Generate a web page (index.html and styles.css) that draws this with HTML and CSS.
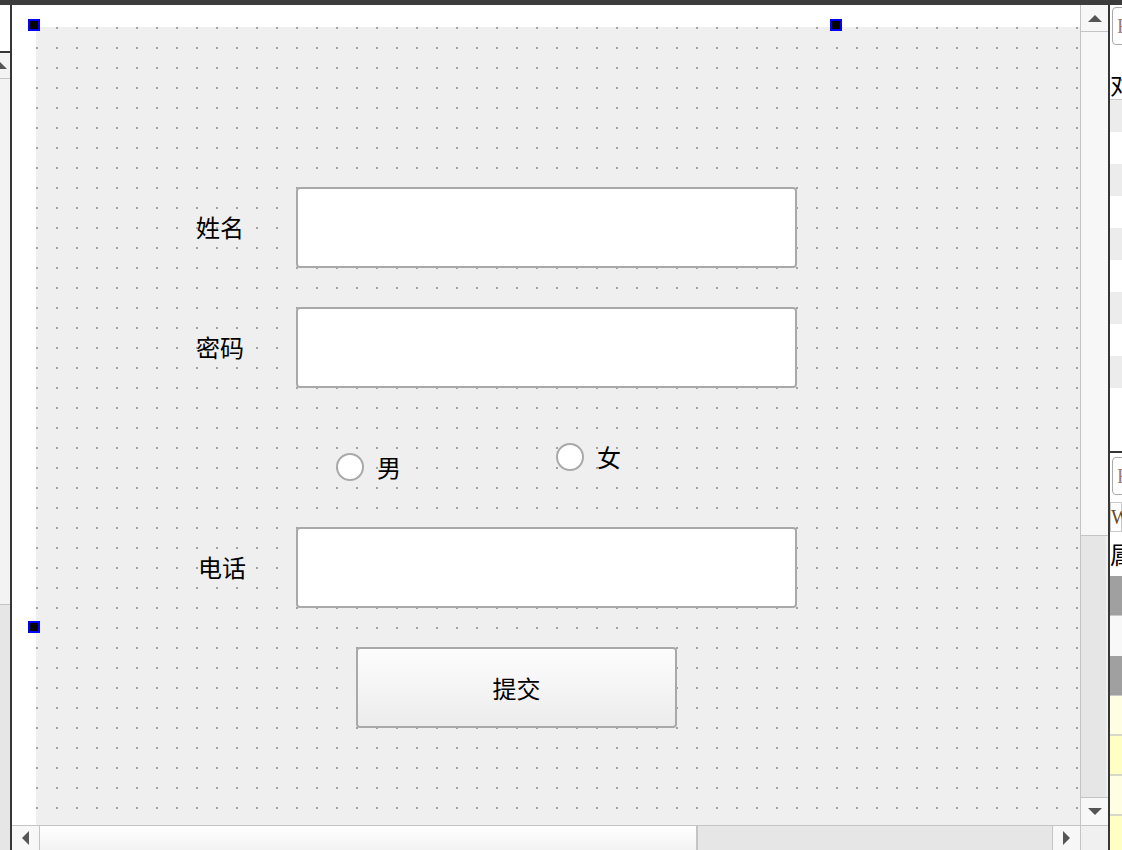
FILE: index.html
```html
<!DOCTYPE html>
<html lang="zh-CN">
<head>
    <meta charset="UTF-8">
    <title>Form - 设计器</title>
    <link rel="stylesheet" href="styles.css">
</head>
<body>
    <div class="topbar"></div>
    <div class="main">
        <div class="left-pane">
            <div class="lp-head"></div>
            <div class="lp-list">
                <span class="lp-arrow"></span>
                <div class="lp-thumb"></div>
            </div>
            <div class="lp-bottom"></div>
        </div>

        <div class="editor">
            <div class="editor-top">
                <div class="canvas">
                    <div class="grid">
                        <div class="form">
                            <div class="field">
                                <label class="field-label">姓名</label>
                                <div class="line-edit"></div>
                            </div>
                            <div class="field">
                                <label class="field-label">密码</label>
                                <div class="line-edit"></div>
                            </div>
                            <div class="radios">
                                <div class="radio radio-male">
                                    <span class="radio-dot"></span>
                                    <span class="radio-text">男</span>
                                </div>
                                <div class="radio radio-female">
                                    <span class="radio-dot"></span>
                                    <span class="radio-text">女</span>
                                </div>
                            </div>
                            <div class="field">
                                <label class="field-label field-label-phone">电话</label>
                                <div class="line-edit"></div>
                            </div>
                            <div class="submit-row">
                                <div class="push-button">提交</div>
                            </div>
                        </div>
                    </div>
                    <!-- selection handles of the form -->
                    <span class="handle handle-tl"></span>
                    <span class="handle handle-tr"></span>
                    <span class="handle handle-bl"></span>
                </div>

                <div class="vscroll">
                    <div class="sb-btn"><span class="arrow-up"></span></div>
                    <div class="sb-thumb-v"></div>
                    <div class="sb-track-v"></div>
                    <div class="sb-btn sb-btn-down"><span class="arrow-down"></span></div>
                </div>
            </div>

            <div class="hscroll">
                <div class="sb-btn-h"><span class="arrow-left"></span></div>
                <div class="sb-thumb-h"></div>
                <div class="sb-track-h"></div>
                <div class="sb-btn-h sb-btn-right"><span class="arrow-right"></span></div>
                <div class="sb-corner"></div>
            </div>
        </div>

        <div class="right-pane">
            <div class="rp-filter"><div class="rp-box">F</div></div>
            <div class="rp-header">对象</div>
            <div class="rp-stripes">
                <div class="rp-row"></div>
                <div class="rp-row rp-alt"></div>
                <div class="rp-row"></div>
                <div class="rp-row rp-alt"></div>
                <div class="rp-row"></div>
                <div class="rp-row rp-alt"></div>
                <div class="rp-row"></div>
                <div class="rp-row rp-alt"></div>
                <div class="rp-row"></div>
                <div class="rp-row rp-alt"></div>
            </div>
            <div class="rp-gap"></div>
            <div class="rp-filter rp-filter2"><div class="rp-box">F</div></div>
            <div class="rp-class">W</div>
            <div class="rp-prop">属性</div>
            <div class="rp-group"></div>
            <div class="rp-plain"></div>
            <div class="rp-group"></div>
            <div class="rp-yellow"></div>
            <div class="rp-yellow rp-yellow-alt"></div>
            <div class="rp-yellow"></div>
            <div class="rp-yellow rp-yellow-alt rp-last"></div>
        </div>
    </div>
</body>
</html>
```

FILE: styles.css
```css
body {
    margin: 0;
    width: 1122px;
    height: 850px;
    overflow: hidden;
    background-color: #ffffff;
    font-family: "Noto Sans CJK SC", "Noto Sans", sans-serif;
    color: #000;
}

.topbar {
    height: 5px;
    background-color: #3c3c3c;
}

.main {
    display: flex;
    height: 845px;
}

/* left dock */
.left-pane {
    width: 10px;
    border-right: 2px solid #363636;
    display: flex;
    flex-direction: column;
    overflow: hidden;
}

.lp-head {
    height: 46px;
    background-color: #fff;
    border-bottom: 2px solid #363636;
}

.lp-list {
    height: 551px;
    background-color: #f3f3f3;
    border-bottom: 1px solid #c4c4c4;
    position: relative;
}

.lp-arrow {
    position: absolute;
    left: -7px;
    top: 9px;
    border-left: 7px solid transparent;
    border-right: 7px solid transparent;
    border-bottom: 7px solid #555;
}

.lp-thumb {
    margin-top: 25px;
    border-top: 1px solid #c8c8c8;
}

.lp-bottom {
    flex: 1;
    background-color: #e6e6e6;
}

/* central editor */
.editor {
    width: 1096px;
    display: flex;
    flex-direction: column;
}

.editor-top {
    display: flex;
    height: 820px;
}

.canvas {
    position: relative;
    width: 1068px;
    padding: 22px 0 0 24px;
    box-sizing: border-box;
    background-color: #fff;
    overflow: hidden;
}

.grid {
    height: 100%;
    background-color: #efefef;
    background-image: conic-gradient(at 2px 2px, #efefef 270deg, #a4a4a4 270deg);
    background-size: 20px 20px;
}

.form {
    padding: 160px 0 0 160px;
    font-size: 24px;
}

.field {
    display: flex;
    align-items: center;
    margin-bottom: 39px;
}

.field-label {
    width: 100px;
    line-height: 1;
    padding-bottom: 1px;
}

.field-label-phone {
    padding-left: 2px;
    width: 98px;
}

.line-edit {
    width: 501px;
    height: 81px;
    box-sizing: border-box;
    background-color: #fff;
    border: 2px solid #a9a9a9;
    border-radius: 4px;
}

.radios {
    display: flex;
    align-items: flex-start;
    height: 139px;
    margin-top: -39px;
    padding-left: 140px;
}

.radio {
    display: flex;
    align-items: center;
    gap: 13px;
    line-height: 1;
}

.radio-male {
    width: 220px;
    margin-top: 65px;
}

.radio-female {
    margin-top: 55px;
}

.radio-dot {
    width: 28px;
    height: 28px;
    box-sizing: border-box;
    border: 2px solid #a9a9a9;
    border-radius: 50%;
    background-color: #fff;
}

.radio-text {
    padding-bottom: 1px;
}

.submit-row {
    padding-left: 160px;
}

.push-button {
    width: 321px;
    height: 81px;
    box-sizing: border-box;
    border: 2px solid #a9a9a9;
    border-radius: 4px;
    background: linear-gradient(#fdfdfd, #ececec);
    display: flex;
    align-items: center;
    justify-content: center;
    padding-bottom: 1px;
}

.handle {
    position: absolute;
    width: 12px;
    height: 12px;
    box-sizing: border-box;
    background-color: #000;
    border: 2px solid #0000ff;
}

.handle-tl { left: 16px; top: 14px; }
.handle-tr { left: 818px; top: 14px; }
.handle-bl { left: 16px; top: 616px; }

/* scrollbars */
.vscroll {
    width: 28px;
    box-sizing: border-box;
    border-left: 1px solid #c4c4c4;
    display: flex;
    flex-direction: column;
    background-color: #f7f7f7;
}

.sb-btn {
    height: 26px;
    border-bottom: 1px solid #c4c4c4;
    display: flex;
    align-items: center;
    justify-content: center;
}

.sb-btn-down {
    height: 27px;
    border-bottom: 0;
    border-top: 1px solid #c4c4c4;
}

.sb-thumb-v {
    height: 503px;
    border-bottom: 1px solid #c4c4c4;
    background-color: #f7f7f7;
}

.sb-track-v {
    flex: 1;
    background-color: #e6e6e6;
    border-right: 2px solid #f0f0f0;
}

.arrow-up {
    border-left: 7px solid transparent;
    border-right: 7px solid transparent;
    border-bottom: 7px solid #555;
}

.arrow-down {
    border-left: 7px solid transparent;
    border-right: 7px solid transparent;
    border-top: 7px solid #555;
}

.hscroll {
    height: 25px;
    display: flex;
    box-sizing: border-box;
    border-top: 1px solid #c4c4c4;
}

.sb-btn-h {
    width: 28px;
    box-sizing: border-box;
    border-right: 1px solid #c4c4c4;
    background-color: #f7f7f7;
    display: flex;
    align-items: center;
    justify-content: center;
}

.sb-btn-right {
    border-right: 0;
    border-left: 1px solid #c4c4c4;
}

.sb-thumb-h {
    width: 656px;
    border-right: 2px solid #c4c4c4;
    background: linear-gradient(#ffffff, #f3f3f3);
}

.sb-track-h {
    flex: 1;
    background-color: #e6e6e6;
}

.sb-corner {
    width: 28px;
    box-sizing: border-box;
    border-left: 1px solid #c4c4c4;
    background-color: #f0f0f0;
}

.arrow-left {
    border-top: 7px solid transparent;
    border-bottom: 7px solid transparent;
    border-right: 7px solid #555;
}

.arrow-right {
    border-top: 7px solid transparent;
    border-bottom: 7px solid transparent;
    border-left: 7px solid #555;
}

/* right docks */
.right-pane {
    width: 12px;
    border-left: 2px solid #363636;
    display: flex;
    flex-direction: column;
    overflow: hidden;
    white-space: nowrap;
}

.rp-filter {
    height: 43px;
    padding: 2px 0 0 2px;
    box-sizing: border-box;
    background-color: #fff;
}

.rp-box {
    height: 38px;
    width: 30px;
    box-sizing: border-box;
    border: 1px solid #aaa;
    border-radius: 4px;
    padding-left: 4px;
    font-family: "Liberation Serif", serif;
    font-size: 20px;
    line-height: 36px;
    color: #9a8078;
}

.rp-header {
    height: 52px;
    box-sizing: border-box;
    padding-top: 21px;
    border-bottom: 1px solid #c8c8c8;
    font-size: 24px;
    line-height: 30px;
    background-color: #fff;
}

.rp-stripes {
    display: flex;
    flex-direction: column;
}

.rp-row {
    height: 32px;
    background-color: #ececec;
}

.rp-row.rp-alt {
    background-color: #fff;
}

.rp-gap {
    height: 31px;
    background-color: #fff;
    border-bottom: 2px solid #363636;
}

.rp-filter2 {
    height: 49px;
    padding-top: 4px;
}

.rp-class {
    height: 30px;
    box-sizing: border-box;
    border: 1px solid #c8c8c8;
    font-family: "Liberation Serif", serif;
    font-size: 20px;
    line-height: 28px;
    color: #6a4a2a;
}

.rp-prop {
    height: 44px;
    font-size: 24px;
    line-height: 44px;
    background-color: #fff;
}

.rp-group {
    height: 39px;
    background-color: #a0a0a0;
    border-bottom: 1px solid #c8c8c8;
}

.rp-plain {
    height: 40px;
    background-color: #f8f8f8;
}

.rp-yellow {
    height: 38px;
    background-color: #fffde2;
    border-bottom: 2px solid #d8d8c8;
}

.rp-yellow.rp-yellow-alt {
    background-color: #ffffc4;
}

.rp-last {
    border-bottom: 0;
    flex: 1;
}
```
